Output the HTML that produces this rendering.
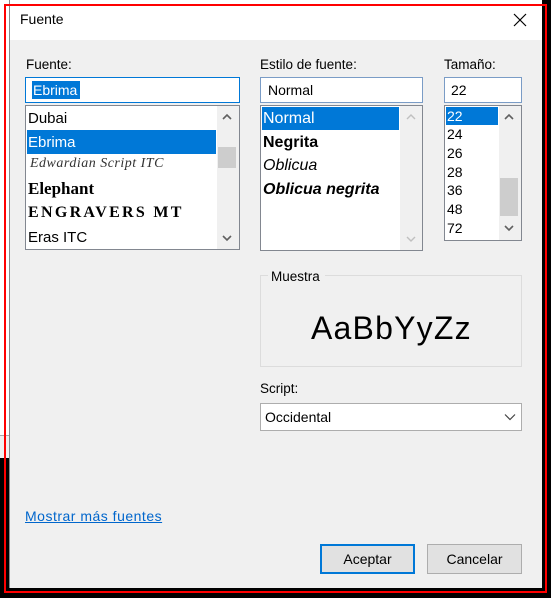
<!DOCTYPE html>
<html><head><style>
*{margin:0;padding:0;box-sizing:border-box}
body{width:551px;height:598px;background:#000;position:relative;overflow:hidden;font-family:"Liberation Sans",sans-serif;font-size:13px;color:#000}
.a{position:absolute}
.t{position:absolute;white-space:nowrap;line-height:1}
.box{position:absolute;background:#fff;border:1px solid #828790}
.sb{position:absolute;background:#f0f0f0}
</style></head><body>
<div class="a" style="left:0;top:0;width:10px;height:458px;background:#fff"></div>
<div class="a" style="left:0;top:435px;width:10px;height:23px;background:#f0f0f0;border-top:1px solid #aaa"></div>
<div class="a" style="left:0;top:0;width:542px;height:4px;background:#fff"></div>
<div class="a" style="left:9px;top:0;width:533px;height:588px;background:#f0f0f0;border-left:1px solid #888"></div>
<div class="a" style="left:10px;top:0;width:532px;height:40px;background:#fff"></div>
<div class="t" style="left:20px;top:12px;font-size:14px">Fuente</div>
<svg class="a" style="left:513px;top:13px" width="14" height="14"><path d="M1 1L13 13M13 1L1 13" stroke="#000" stroke-width="1.2"/></svg>

<div class="t" style="left:26px;top:58px;font-size:13.5px">Fuente:</div>
<div class="a" style="left:25px;top:77px;width:215px;height:26px;background:#fff;border:1px solid #0078d7"></div>
<div class="a" style="left:32px;top:81px;width:48px;height:18px;background:#0078d7"></div>
<div class="t" style="left:33px;top:83px;color:#fff;font-size:14px">Ebrima</div>
<div class="box" style="left:25px;top:105px;width:215px;height:145px"></div>
<div class="a" style="left:27px;top:130px;width:189px;height:24px;background:#0078d7"></div>
<div class="t" style="left:28px;top:111px;font-size:15px">Dubai</div>
<div class="t" style="left:28px;top:135px;font-size:15px;color:#fff">Ebrima</div>
<div class="t" style="left:30px;top:157px;font-size:14px;font-style:italic;font-family:'Liberation Serif',serif;color:#333;letter-spacing:0.5px">Edwardian Script ITC</div>
<div class="t" style="left:28px;top:180px;font-size:17px;font-weight:bold;font-family:'Liberation Serif',serif">Elephant</div>
<div class="t" style="left:28px;top:205px;font-size:16px;font-weight:bold;font-family:'Liberation Serif',serif;letter-spacing:2.3px">ENGRAVERS MT</div>
<div class="t" style="left:28px;top:230px;font-size:15px">Eras ITC</div>
<div class="sb" style="left:217px;top:106px;width:22px;height:143px"></div>
<div class="a" style="left:218px;top:147px;width:18px;height:21px;background:#cdcdcd"></div>
<svg class="a" style="left:221px;top:113px" width="12" height="8"><path d="M2 6L6 2L10 6" stroke="#606060" stroke-width="1.6" fill="none"/></svg>
<svg class="a" style="left:221px;top:234px" width="12" height="8"><path d="M2 2L6 6L10 2" stroke="#606060" stroke-width="1.6" fill="none"/></svg>

<div class="t" style="left:260px;top:58px;font-size:13.5px">Estilo de fuente:</div>
<div class="a" style="left:260px;top:77px;width:163px;height:26px;background:#fff;border:1px solid #7a9cc6"></div>
<div class="t" style="left:268px;top:83px;font-size:14px">Normal</div>
<div class="box" style="left:260px;top:105px;width:163px;height:146px"></div>
<div class="a" style="left:262px;top:107px;width:137px;height:23px;background:#0078d7"></div>
<div class="t" style="left:263px;top:111px;font-size:16px;color:#fff">Normal</div>
<div class="t" style="left:263px;top:135px;font-size:16px;font-weight:bold">Negrita</div>
<div class="t" style="left:263px;top:158px;font-size:16px;font-style:italic">Oblicua</div>
<div class="t" style="left:263px;top:182px;font-size:16px;font-style:italic;font-weight:bold">Oblicua negrita</div>
<div class="sb" style="left:400px;top:106px;width:22px;height:144px"></div>
<svg class="a" style="left:405px;top:113px" width="12" height="8"><path d="M2 6L6 2L10 6" stroke="#c0c0c0" stroke-width="1.4" fill="none"/></svg>
<svg class="a" style="left:405px;top:235px" width="12" height="8"><path d="M2 2L6 6L10 2" stroke="#c0c0c0" stroke-width="1.4" fill="none"/></svg>

<div class="t" style="left:444px;top:58px;font-size:13.5px">Tamaño:</div>
<div class="a" style="left:444px;top:77px;width:78px;height:26px;background:#fff;border:1px solid #7a9cc6"></div>
<div class="t" style="left:451px;top:83px;font-size:14px">22</div>
<div class="box" style="left:444px;top:105px;width:78px;height:136px"></div>
<div class="a" style="left:446px;top:107px;width:52px;height:18px;background:#0078d7"></div>
<div class="t" style="left:447px;top:109px;font-size:14px;color:#fff">22</div>
<div class="t" style="left:447px;top:127px;font-size:14px">24</div>
<div class="t" style="left:447px;top:146px;font-size:14px">26</div>
<div class="t" style="left:447px;top:165px;font-size:14px">28</div>
<div class="t" style="left:447px;top:183px;font-size:14px">36</div>
<div class="t" style="left:447px;top:202px;font-size:14px">48</div>
<div class="t" style="left:447px;top:221px;font-size:14px">72</div>
<div class="sb" style="left:499px;top:106px;width:22px;height:134px"></div>
<div class="a" style="left:500px;top:178px;width:18px;height:38px;background:#cdcdcd"></div>
<svg class="a" style="left:503px;top:113px" width="12" height="8"><path d="M2 6L6 2L10 6" stroke="#606060" stroke-width="1.6" fill="none"/></svg>
<svg class="a" style="left:503px;top:224px" width="12" height="8"><path d="M2 2L6 6L10 2" stroke="#606060" stroke-width="1.6" fill="none"/></svg>

<div class="a" style="left:260px;top:275px;width:262px;height:92px;border:1px solid #dcdcdc"></div>
<div class="a" style="left:268px;top:270px;width:57px;height:12px;background:#f0f0f0"></div>
<div class="t" style="left:271px;top:270px;font-size:13.5px">Muestra</div>
<div class="t" style="left:311px;top:312px;font-size:32px;letter-spacing:1.2px">AaBbYyZz</div>

<div class="t" style="left:260px;top:382px;font-size:13.5px">Script:</div>
<div class="a" style="left:260px;top:403px;width:262px;height:28px;background:#fff;border:1px solid #adadad"></div>
<div class="t" style="left:265px;top:410px;font-size:14px">Occidental</div>
<svg class="a" style="left:504px;top:413px" width="12" height="8"><path d="M1 1.5L6 6.5L11 1.5" stroke="#444" stroke-width="1.2" fill="none"/></svg>

<div class="t" style="left:25px;top:509px;color:#0066cc;text-decoration:underline;font-size:14px;letter-spacing:0.5px">Mostrar más fuentes</div>

<div class="a" style="left:320px;top:544px;width:95px;height:30px;background:#e1e1e1;border:2px solid #0078d7"></div>
<div class="t" style="left:320px;top:552px;width:95px;text-align:center;font-size:14px">Aceptar</div>
<div class="a" style="left:427px;top:544px;width:95px;height:30px;background:#e1e1e1;border:1px solid #adadad"></div>
<div class="t" style="left:427px;top:552px;width:95px;text-align:center;font-size:14px">Cancelar</div>

<div class="a" style="left:4px;top:4px;width:543px;height:589px;border:2px solid #f00"></div>
</body></html>
